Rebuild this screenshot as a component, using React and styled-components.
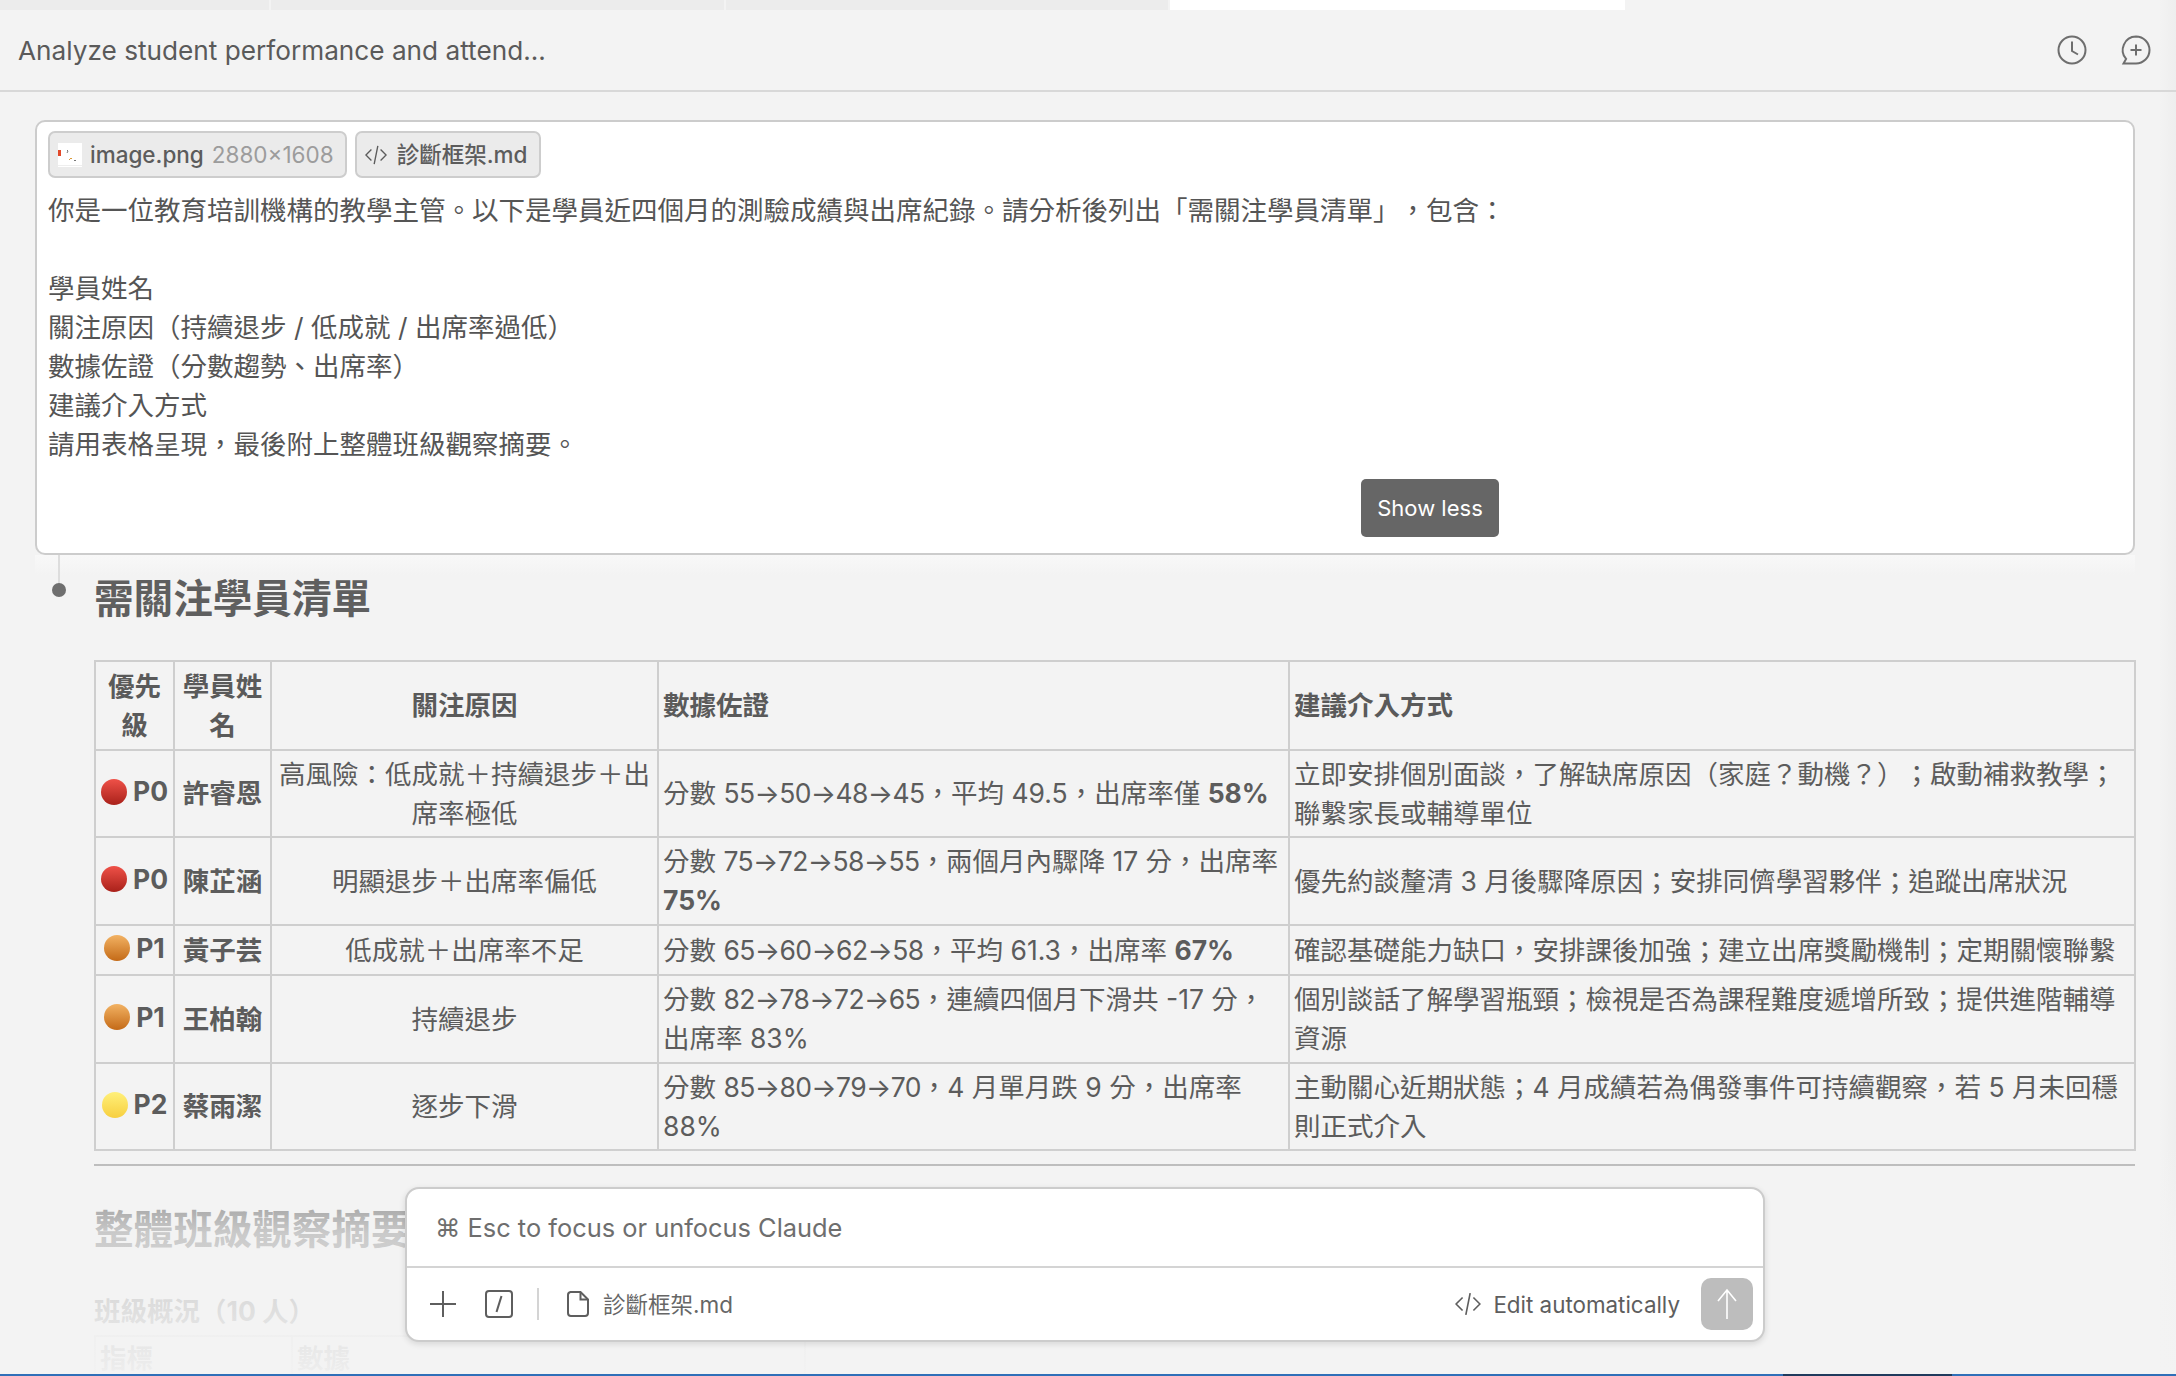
import React from "react";
import styled, { createGlobalStyle } from "styled-components";

const FONT = `"Inter", "Noto Sans CJK TC", "Noto Sans", sans-serif`;

const GlobalStyle = createGlobalStyle`
  html, body {
    margin: 0;
    padding: 0;
    background: #f3f3f3;
  }
  * {
    box-sizing: border-box;
  }
`;

const Page = styled.div`
  position: relative;
  width: 2176px;
  height: 1376px;
  overflow: hidden;
  background: linear-gradient(90deg, #f3f3f3 0, #f3f3f3 2160px, #eeeeee 2176px);
  font-family: ${FONT};
  font-size: 26.5px;
  line-height: 39px;
  color: #5c5c5c;
  text-spacing-trim: space-all;
`;

const TabStrip = styled.div`
  display: flex;
  height: 10px;
  gap: 2px;
`;

const Tab = styled.div`
  width: ${(p) => p.$w}px;
  background: ${(p) => (p.$active ? "#ffffff" : "#ececec")};
`;

const Header = styled.header`
  display: flex;
  align-items: center;
  justify-content: space-between;
  height: 82px;
  padding: 0 25px 0 18px;
  border-bottom: 2px solid #d8d8d8;
`;

const Title = styled.div`
  font-size: 26.2px;
  color: #5a5a5a;
`;

const HeaderIcons = styled.div`
  display: flex;
  align-items: center;
  gap: 32px;
  color: #6e6e6e;
`;

const Content = styled.main`
  padding: 28px 41px 0 35px;
`;

const Prompt = styled.section`
  position: relative;
  height: 435px;
  padding: 9px 11px;
  background: #ffffff;
  border: 2px solid #cccccc;
  border-radius: 10px;
`;

const Chips = styled.div`
  display: flex;
  gap: 8px;
  margin-bottom: 13px;
`;

const Chip = styled.div`
  display: flex;
  align-items: center;
  gap: 8px;
  height: 47px;
  padding: 0 11px 0 8px;
  background: #ebebeb;
  border: 2px solid #cdcdcd;
  border-radius: 7px;
  font-size: 22.5px;
  font-weight: 500;
  color: #5c5c5c;
`;

const CodeChip = styled(Chip)`
  gap: 10px;
  padding-right: 12px;
`;

const ChipMuted = styled.span`
  font-weight: 400;
  color: #9c9c9c;
`;

const PromptLine = styled.div`
  min-height: 39px;
  color: #555555;
`;

const ShowLess = styled.button`
  position: absolute;
  top: 357px;
  left: 1324px;
  width: 138px;
  height: 58px;
  border: 0;
  border-radius: 5px;
  background: #666666;
  color: #ffffff;
  font-family: ${FONT};
  font-size: 22px;
`;

const Answer = styled.section`
  position: relative;
  padding-left: 59px;
`;

const Glow = styled.div`
  position: absolute;
  top: 0;
  left: 0;
  right: 0;
  height: 20px;
  background: linear-gradient(180deg, #f8f8f8, #f3f3f3);
`;

const Rail = styled.div`
  position: absolute;
  top: 0;
  left: 23px;
  width: 2px;
  height: 30px;
  background: #dddddd;
`;

const Dot = styled.div`
  position: absolute;
  top: 28px;
  left: 17px;
  width: 14px;
  height: 14px;
  border-radius: 50%;
  background: #6e6e6e;
`;

const Heading = styled.h2`
  position: relative;
  margin: 0;
  padding-top: 19px;
  font-size: 39.6px;
  line-height: 50px;
  font-weight: 700;
  color: #5f5f5f;
`;

const Table = styled.table`
  width: 2040px;
  margin-top: 36px;
  border-collapse: collapse;
  table-layout: fixed;
`;

const Row = styled.tr`
  height: ${(p) => p.$h}px;
`;

const Th = styled.th`
  padding: 0 4px;
  border: 2px solid #cecece;
  font-weight: 700;
  text-align: ${(p) => p.$align || "center"};
  color: #5a5a5a;
`;

const Td = styled.td`
  padding: 0 4px;
  border: 2px solid #cecece;
  text-align: ${(p) => p.$align || "left"};
  font-weight: ${(p) => (p.$bold ? 700 : 400)};
  color: #5c5c5c;
`;

const Priority = styled.span`
  display: inline-flex;
  align-items: center;
  gap: 6px;
  font-weight: 700;
  white-space: nowrap;
`;

const Ball = styled.span`
  width: 26px;
  height: 26px;
  border-radius: 50%;
  background: linear-gradient(180deg, ${(p) => p.$top} 0%, ${(p) => p.$bottom} 100%);
`;

const Trend = styled.span`
  letter-spacing: -0.6px;
`;

const Rule = styled.hr`
  height: 2px;
  margin: 13px 0 0;
  border: 0;
  background: #b4b4b4;
`;

const Heading2 = styled(Heading)`
  padding-top: 39px;
`;

const SubHeading = styled.h3`
  margin: 0;
  padding-top: 37px;
  font-size: 26.5px;
  line-height: 39px;
  font-weight: 700;
  color: #5a5a5a;
`;

const SummaryTable = styled(Table)`
  width: 710px;
  margin-top: 4px;
`;

const Fade = styled.div`
  position: absolute;
  left: 0;
  right: 0;
  bottom: 0;
  height: 230px;
  background: linear-gradient(
    180deg,
    rgba(243, 243, 243, 0) 0%,
    rgba(243, 243, 243, 0.72) 38%,
    rgba(243, 243, 243, 0.9) 80%,
    rgba(243, 243, 243, 0.97) 100%
  );
`;

const Composer = styled.div`
  position: absolute;
  top: 1187px;
  left: 405px;
  width: 1360px;
  height: 155px;
  background: #ffffff;
  border: 2px solid #cccccc;
  border-radius: 14px;
  box-shadow: 0 2px 6px rgba(0, 0, 0, 0.12);
`;

const ComposerInput = styled.div`
  display: flex;
  align-items: center;
  height: 79px;
  padding-left: 28px;
  border-bottom: 2px solid #d4d4d4;
  font-size: 25.4px;
  color: #6e6e6e;
`;

const ComposerBar = styled.div`
  display: flex;
  align-items: center;
  height: 71px;
  padding: 1px 10px 0 22px;
  color: #5e5e5e;
`;

const BarIcons = styled.div`
  display: flex;
  align-items: center;
  gap: 28px;
`;

const BarDivider = styled.div`
  width: 2px;
  height: 32px;
  margin: 0 28px 0 24px;
  background: #d4d4d4;
`;

const FileName = styled.span`
  margin-left: 14px;
  font-size: 22.5px;
  color: #666666;
`;

const EditMode = styled.div`
  display: flex;
  align-items: center;
  gap: 12px;
  margin-left: auto;
  font-size: 22.4px;
  color: #5e5e5e;
`;

const SendButton = styled.div`
  display: flex;
  align-items: center;
  justify-content: center;
  width: 52px;
  height: 52px;
  margin-left: 21px;
  border-radius: 10px;
  background: #bdbdbd;
  color: #ffffff;
`;

const StatusBar = styled.div`
  position: absolute;
  left: 0;
  right: 0;
  bottom: 0;
  height: 2px;
  background: #2f6fb8;
`;

const StatusSegment = styled.div`
  width: 169px;
  height: 2px;
  margin-left: 1783px;
  background: #1f3a5c;
`;

const ClockIcon = () => (
  <svg width="30" height="30" viewBox="0 0 30 30" fill="none" stroke="currentColor" strokeWidth="2">
    <circle cx="15" cy="15" r="13.5" />
    <path d="M15 6.5V16l6 3.5" />
  </svg>
);

const NewChatIcon = () => (
  <svg width="32" height="32" viewBox="0 0 32 32" fill="none" stroke="currentColor" strokeWidth="2">
    <path d="M17 2.5a13.5 13.5 0 0 1 0 27H4.5l2.6-4.6A13.5 13.5 0 0 1 17 2.5Z" />
    <path d="M17 10.5v11M11.5 16h11" />
  </svg>
);

const CodeIcon = ({ size = 22 }) => (
  <svg width={size} height={size} viewBox="0 0 24 24" fill="none" stroke="currentColor" strokeWidth="1.5">
    <path d="M7 6l-6 6 6 6M17 6l6 6-6 6M14 2l-4 20" />
  </svg>
);

const ImageThumb = () => (
  <svg width="24" height="24" viewBox="0 0 24 24">
    <rect width="24" height="24" fill="#ffffff" />
    <rect x="0" y="7" width="3" height="6" fill="#e2492a" />
    <path d="M9 7l1 1-1 2" stroke="#777777" fill="none" />
    <path d="M11 17l2-2 1 1" stroke="#d99a3a" fill="none" />
    <rect x="16" y="17" width="2" height="1" fill="#777777" />
    <rect x="0" y="22" width="24" height="1" fill="#eeeeee" />
  </svg>
);

const PlusIcon = () => (
  <svg width="28" height="28" viewBox="0 0 28 28" fill="none" stroke="currentColor" strokeWidth="2">
    <path d="M14 1v26M1 14h26" />
  </svg>
);

const SlashIcon = () => (
  <svg width="28" height="28" viewBox="0 0 28 28" fill="none" stroke="currentColor" strokeWidth="2">
    <rect x="1" y="1" width="26" height="26" rx="3" />
    <path d="M16.5 6l-5 16" />
  </svg>
);

const FileIcon = () => (
  <svg width="22" height="26" viewBox="0 0 22 26" fill="none" stroke="currentColor" strokeWidth="2">
    <path d="M3.5 1h10L21 8.500V22a3 3 0 0 1-3 3H4a3 3 0 0 1-3-3V4a3 3 0 0 1 2.500-3Z" />
    <path d="M13.500 1v7.500H21" />
  </svg>
);

const ArrowUpIcon = () => (
  <svg width="22" height="32" viewBox="0 0 22 32" fill="none" stroke="currentColor" strokeWidth="1.6">
    <path d="M11 31V2M2 13 11 2l9 11" />
  </svg>
);

const PROMPT_LINES = [
  "你是一位教育培訓機構的教學主管。以下是學員近四個月的測驗成績與出席紀錄。請分析後列出「需關注學員清單」，包含：",
  "",
  "學員姓名",
  "關注原因（持續退步 / 低成就 / 出席率過低）",
  "數據佐證（分數趨勢、出席率）",
  "建議介入方式",
  "請用表格呈現，最後附上整體班級觀察摘要。",
];

const BALLS = {
  P0: ["#ef5148", "#a9211a"],
  P1: ["#f2b263", "#c46a17"],
  P2: ["#fff07a", "#f7cf3f"],
};

const STUDENTS = [
  {
    h: 87,
    level: "P0",
    name: "許睿恩",
    reason: "高風險：低成就＋持續退步＋出席率極低",
    trend: "55→50→48→45",
    evidence: "，平均 49.5，出席率僅 ",
    rate: "58%",
    action: "立即安排個別面談，了解缺席原因（家庭？動機？）；啟動補救教學；聯繫家長或輔導單位",
  },
  {
    h: 88,
    level: "P0",
    name: "陳芷涵",
    reason: "明顯退步＋出席率偏低",
    trend: "75→72→58→55",
    evidence: "，兩個月內驟降 17 分，出席率 ",
    rate: "75%",
    action: "優先約談釐清 3 月後驟降原因；安排同儕學習夥伴；追蹤出席狀況",
  },
  {
    h: 50,
    level: "P1",
    name: "黃子芸",
    reason: "低成就＋出席率不足",
    trend: "65→60→62→58",
    evidence: "，平均 61.3，出席率 ",
    rate: "67%",
    action: "確認基礎能力缺口，安排課後加強；建立出席獎勵機制；定期關懷聯繫",
  },
  {
    h: 88,
    level: "P1",
    name: "王柏翰",
    reason: "持續退步",
    trend: "82→78→72→65",
    evidence: "，連續四個月下滑共 -17 分，出席率 83%",
    action: "個別談話了解學習瓶頸；檢視是否為課程難度遞增所致；提供進階輔導資源",
  },
  {
    h: 87,
    level: "P2",
    name: "蔡雨潔",
    reason: "逐步下滑",
    trend: "85→80→79→70",
    evidence: "，4 月單月跌 9 分，出席率 88%",
    action: "主動關心近期狀態；4 月成績若為偶發事件可持續觀察，若 5 月未回穩則正式介入",
  },
];

const App = () => {
  return (
    <Page>
      <GlobalStyle />
      <TabStrip>
        <Tab $w={269} />
        <Tab $w={453} />
        <Tab $w={442} />
        <Tab $w={455} $active />
      </TabStrip>
      <Header>
        <Title>Analyze student performance and attend...</Title>
        <HeaderIcons>
          <ClockIcon />
          <NewChatIcon />
        </HeaderIcons>
      </Header>
      <Content>
        <Prompt>
          <Chips>
            <Chip>
              <ImageThumb />
              <span>image.png</span>
              <ChipMuted>2880×1608</ChipMuted>
            </Chip>
            <CodeChip>
              <CodeIcon />
              <span>診斷框架.md</span>
            </CodeChip>
          </Chips>
          {PROMPT_LINES.map((line, i) => (
            <PromptLine key={i}>{line}</PromptLine>
          ))}
          <ShowLess>Show less</ShowLess>
        </Prompt>
        <Answer>
          <Glow />
          <Rail />
          <Dot />
          <Heading>需關注學員清單</Heading>
          <Table>
            <colgroup>
              <col width="79" />
              <col width="97" />
              <col width="387" />
              <col width="631" />
              <col width="846" />
            </colgroup>
            <thead>
              <Row $h={89}>
                <Th>優先級</Th>
                <Th>學員姓名</Th>
                <Th>關注原因</Th>
                <Th $align="left">數據佐證</Th>
                <Th $align="left">建議介入方式</Th>
              </Row>
            </thead>
            <tbody>
              {STUDENTS.map((s) => (
                <Row key={s.name} $h={s.h}>
                  <Td $align="center">
                    <Priority>
                      <Ball $top={BALLS[s.level][0]} $bottom={BALLS[s.level][1]} />
                      {s.level}
                    </Priority>
                  </Td>
                  <Td $align="center" $bold>
                    {s.name}
                  </Td>
                  <Td $align="center">{s.reason}</Td>
                  <Td>
                    分數 <Trend>{s.trend}</Trend>
                    {s.evidence}
                    {s.rate && <strong>{s.rate}</strong>}
                  </Td>
                  <Td>{s.action}</Td>
                </Row>
              ))}
            </tbody>
          </Table>
          <Rule />
          <Heading2>整體班級觀察摘要</Heading2>
          <SubHeading>班級概況（10 人）</SubHeading>
          <SummaryTable>
            <colgroup>
              <col width="197" />
              <col width="513" />
            </colgroup>
            <thead>
              <Row $h={44}>
                <Th $align="left">指標</Th>
                <Th $align="left">數據</Th>
              </Row>
            </thead>
          </SummaryTable>
        </Answer>
      </Content>
      <Fade />
      <Composer>
        <ComposerInput>⌘ Esc to focus or unfocus Claude</ComposerInput>
        <ComposerBar>
          <BarIcons>
            <PlusIcon />
            <SlashIcon />
          </BarIcons>
          <BarDivider />
          <FileIcon />
          <FileName>診斷框架.md</FileName>
          <EditMode>
            <CodeIcon size={26} />
            Edit automatically
          </EditMode>
          <SendButton>
            <ArrowUpIcon />
          </SendButton>
        </ComposerBar>
      </Composer>
      <StatusBar>
        <StatusSegment />
      </StatusBar>
    </Page>
  );
};

export default App;
